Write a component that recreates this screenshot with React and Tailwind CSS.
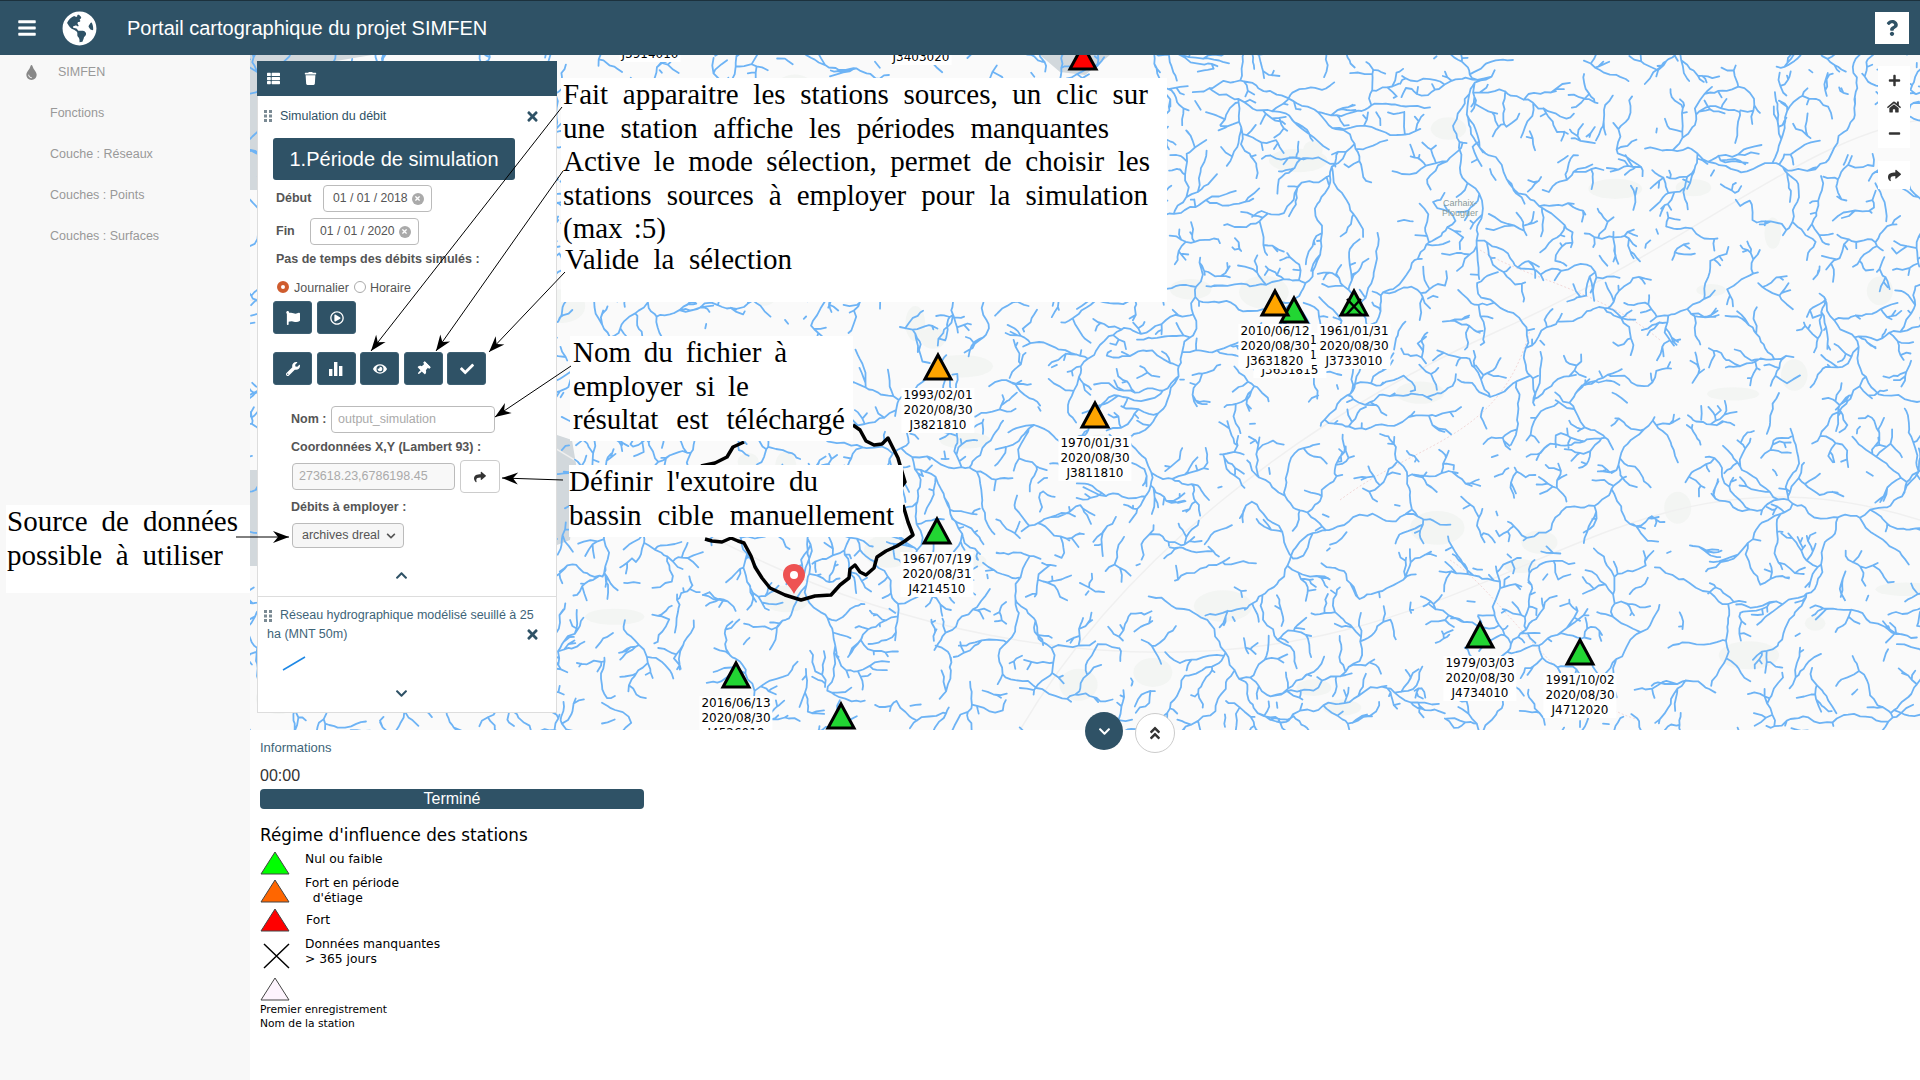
import React from "react";
import {
  FaBars, FaGlobeAmericas, FaTint, FaThList, FaTrash, FaTimes, FaFlag, FaRegPlayCircle, FaWrench,
  FaEye, FaThumbtack, FaCheck, FaShare, FaHome, FaPlus, FaMinus, FaChevronDown, FaChevronUp,
  FaAngleDoubleUp, FaQuestion,
} from "react-icons/fa";

// ── Hydrographic network, generated once from a fixed seed ───────────────────
let seed = 4711;
function rnd() {
  seed = (seed * 16807) % 2147483647;
  return seed / 2147483647;
}

const CELL = 14;

// Branches grow breadth first and stop when they reach a cell another one holds,
// which spreads the streams evenly over the map like a real catchment.
function buildRivers() {
  const occ = new Map();
  const out = [];
  const key = (x, y) => `${Math.floor(x / CELL)},${Math.floor(y / CELL)}`;
  const inside = (x, y) => x > 235 && x < 1935 && y > 40 && y < 745;
  let nextId = 1;

  function grow(queue) {
    while (queue.length) {
      const b = queue.shift();
      const id = nextId++;
      let { x, y, a } = b;
      let base = b.a;
      let d = `M${x.toFixed(1)} ${y.toFixed(1)}`;
      let walked = 0;
      let steps = 0;
      while (walked < b.len) {
        const step = 3 + rnd() * 5;
        base += (rnd() - 0.5) * 0.35;
        a += (rnd() - 0.5) * 1.9;
        a += (base - a) * 0.4;
        const nx = x + Math.cos(a) * step;
        const ny = y + Math.sin(a) * step;
        if (!inside(nx, ny)) break;
        const k = key(nx, ny);
        const holder = occ.get(k);
        if (holder && holder !== id && (holder !== b.parent || steps > 4)) break;
        occ.set(k, id);
        x = nx;
        y = ny;
        walked += step;
        steps++;
        d += `L${x.toFixed(1)} ${y.toFixed(1)}`;
        if (b.len > 10 && rnd() < 0.3) {
          const side = rnd() < 0.5 ? -1 : 1;
          queue.push({
            x, y, parent: id,
            a: a + side * (0.6 + rnd() * 0.8),
            len: b.len * (0.3 + rnd() * 0.4),
          });
        }
      }
      if (steps > 0) out.push(d);
    }
  }

  for (let gx = 240; gx < 1940; gx += 150) {
    for (let gy = 45; gy < 740; gy += 150) {
      grow([{ x: gx + rnd() * 110, y: gy + rnd() * 110, a: rnd() * Math.PI * 2, len: 170 + rnd() * 130, parent: 0 }]);
    }
  }
  // Fill what is left with short streams
  for (let i = 0; i < 1500; i++) {
    const x = 240 + rnd() * 1690;
    const y = 45 + rnd() * 695;
    if (!occ.has(key(x, y))) {
      grow([{ x, y, a: rnd() * Math.PI * 2, len: 35 + rnd() * 50, parent: 0 }]);
    }
  }
  return out.join("");
}

function buildBlotches() {
  const out = [];
  for (let i = 0; i < 60; i++) {
    out.push({ cx: 250 + rnd() * 1670, cy: 55 + rnd() * 675, rx: 8 + rnd() * 24, ry: 6 + rnd() * 12 });
  }
  return out;
}

const riverPath = buildRivers();
const blotches = buildBlotches();

const stations = [
  { x: 1083, base: 70, color: "#ff0000", lines: [] },
  { x: 650, base: 20, lines: ["J3914010"], hideMark: true, labelTop: -8 },
  { x: 921, base: 20, lines: ["J3403020"], hideMark: true, labelTop: -5 },
  { x: 938, base: 380, color: "#ffa500", lines: ["1993/02/01", "2020/08/30", "J3821810"] },
  { x: 1095, base: 428, color: "#ffa500", lines: ["1970/01/31", "2020/08/30", "J3811810"] },
  { x: 1294, base: 323, color: "#22d633", lines: ["1970/01/13", "2020/08/13", "J3631815"], labelX: 1290, labelTop: 333 - 55 },
  { x: 1275, base: 316, color: "#ffa500", lines: ["2010/06/12", "2020/08/30", "J3631820"] },
  { x: 1354, base: 316, color: "#22d633", cross: true, lines: ["1961/01/31", "2020/08/30", "J3733010"] },
  { x: 937, base: 544, color: "#22d633", lines: ["1967/07/19", "2020/08/31", "J4214510"] },
  { x: 736, base: 688, color: "#22d633", lines: ["2016/06/13", "2020/08/30", "J4526010"] },
  { x: 841, base: 729, color: "#22d633", lines: [] },
  { x: 1480, base: 648, color: "#22d633", lines: ["1979/03/03", "2020/08/30", "J4734010"] },
  { x: 1580, base: 665, color: "#22d633", lines: ["1991/10/02", "2020/08/30", "J4712020"] },
];

function Station({ s }) {
  const left = s.x - 250;
  const top = s.base - 55;
  return (
    <>
      {!s.hideMark && (
        <svg className="absolute" width="36" height="34" viewBox="0 0 36 34" style={{ left: left - 18, top: top - 29 }}>
          <path d="M18 4 L31 28 L5 28 Z" fill={s.color} stroke="#000" strokeWidth="3" strokeLinejoin="miter" />
          {s.cross && <path d="M11 12 L26 28 M25 12 L10 28" stroke="#000" strokeWidth="2.5" />}
        </svg>
      )}
      {s.lines.length > 0 && (
        <div
          className="absolute -translate-x-1/2 text-center text-[12px] leading-[15px] text-black whitespace-nowrap font-['DejaVu_Sans',sans-serif]"
          style={{ left: (s.labelX || s.x) - 250, top: s.labelTop !== undefined ? s.labelTop : top + 8 }}
        >
          {s.lines.map((l, i) => (
            <div key={i} className="bg-white px-[2px]">{l}</div>
          ))}
        </div>
      )}
    </>
  );
}

function MapLayer() {
  return (
    <svg className="absolute inset-0" width="1670" height="675" viewBox="250 55 1670 675">
      <rect x="250" y="55" width="1670" height="675" fill="#fafafa" />
      {blotches.map((b, i) => (
        <ellipse key={i} cx={b.cx} cy={b.cy} rx={b.rx} ry={b.ry} fill="#f3f5f3" />
      ))}
      <path d="M250 55 L372 55 L330 62 L257 66 L257 190 L250 190 Z M250 470 L257 470 L257 566 L250 566 Z M557 435 L572 440 L577 470 L570 540 L557 545 Z M1040 55 L1110 55 L1085 75 L1060 72 Z" fill="#d2d8dc" />
      <path d="M250 300 C500 360 700 620 1100 650 S1600 420 1920 520 M1020 730 C1120 560 1300 420 1500 330 S1800 140 1920 120" fill="none" stroke="#f0f0f0" strokeWidth="1.5" />
      <path d="M1340 500 C1420 440 1500 440 1530 330 M1480 250 C1530 280 1600 290 1660 340 M1450 560 C1500 590 1560 700 1640 720" fill="none" stroke="#f2d8d8" strokeWidth="1" strokeDasharray="2 2" />
      <path d={riverPath} fill="none" stroke="#6db3f5" strokeWidth="1.8" strokeLinejoin="round" strokeLinecap="round" />
      <path
        d="M701 466 L715 463 L727 457 L733 447 L744 442 M853 425 L860 430 L866 441 L874 445 L882 444 L888 438 L893 448 L898 458 L900 465 L905 482 L899 490 M903 505 L908 522 L913 535 L905 541 L897 546 L886 551 L877 557 L874 568 L866 575 L860 572 L855 565 L850 569 L849 578 L840 585 L831 595 L815 596 L801 600 L785 595 L770 588 L762 578 L755 567 L751 556 L744 543 L738 541 L731 538 L722 542 L712 541 L705 539"
        fill="none"
        stroke="#000"
        strokeWidth="3.5"
        strokeLinejoin="round"
      />
    </svg>
  );
}

function Grip() {
  return (
    <svg width="8" height="12" viewBox="0 0 8 12" className="shrink-0 fill-[#7a8a94]">
      <rect x="0" y="0" width="3" height="3" /><rect x="5" y="0" width="3" height="3" />
      <rect x="0" y="4.5" width="3" height="3" /><rect x="5" y="4.5" width="3" height="3" />
      <rect x="0" y="9" width="3" height="3" /><rect x="5" y="9" width="3" height="3" />
    </svg>
  );
}

function BarsIcon() {
  return (
    <svg width="14" height="14" viewBox="0 0 14 14" fill="currentColor">
      <rect x="0" y="7" width="3.4" height="7" />
      <rect x="5" y="0" width="3.4" height="14" />
      <rect x="10" y="4" width="3.4" height="10" />
    </svg>
  );
}

function ToolBtn({ children }) {
  return (
    <button className="w-[39px] h-[33px] rounded-[3px] bg-[#2f5266] border border-[#3d5f72] text-white flex items-center justify-center text-[14px]">
      {children}
    </button>
  );
}

function DateField({ value }) {
  return (
    <div className="w-[109px] h-[27px] rounded-[4px] border border-[#bbb] flex items-center pl-[9px] text-[12.2px] font-normal text-[#555]">
      <span>{value}</span>
      <span className="ml-[4px] w-[12px] h-[12px] rounded-full bg-[#aaa] text-white flex items-center justify-center">
        <FaTimes className="text-[7px]" />
      </span>
    </div>
  );
}

function SidePanel() {
  return (
    <div className="absolute left-[7px] top-[6px] w-[300px] h-[652px] bg-white border-x border-b border-[#ddd] text-[#555]">
      <div className="h-[35px] -mx-px bg-[#2f5266] flex items-center pl-[10px] gap-[24px] text-white text-[13px]">
        <FaThList />
        <FaTrash />
      </div>
      <div className="flex items-center h-[24px] mt-[8px] pl-[6px] pr-[16px] text-[12.5px] text-[#2f5266]">
        <Grip />
        <span className="ml-[8px]">Simulation du débit</span>
        <FaTimes className="ml-auto text-[15px]" />
      </div>
      <div className="ml-[15px] mt-[10px] w-[242px] h-[42px] rounded-[3px] bg-[#2f5266] text-white text-[20px] flex items-center justify-center">
        1.Période de simulation
      </div>
      <div className="flex items-center mt-[5px] ml-[18px] text-[12.5px] font-bold">
        <span className="w-[47px]">Début</span>
        <DateField value="01 / 01 / 2018" />
      </div>
      <div className="flex items-center mt-[6px] ml-[18px] text-[12.5px] font-bold">
        <span className="w-[34px]">Fin</span>
        <DateField value="01 / 01 / 2020" />
      </div>
      <div className="mt-[7px] ml-[18px] text-[12.5px] font-bold leading-[15px]">Pas de temps des débits simulés :</div>
      <div className="flex items-center mt-[14px] ml-[19px] text-[12.5px] h-[15px]">
        <span className="w-[12px] h-[12px] rounded-full bg-white border-[4px] border-[#cf5c2e] -mt-[4px]" />
        <span className="ml-[5px]">Journalier</span>
        <span className="ml-[5px] w-[12px] h-[12px] rounded-full border border-[#aaa] -mt-[4px]" />
        <span className="ml-[4px]">Horaire</span>
      </div>
      <div className="flex gap-[5px] ml-[15px] mt-[5px]">
        <ToolBtn><FaFlag /></ToolBtn>
        <ToolBtn><FaRegPlayCircle /></ToolBtn>
      </div>
      <div className="flex gap-[4.6px] ml-[15px] mt-[18px]">
        <ToolBtn><FaWrench /></ToolBtn>
        <ToolBtn><BarsIcon /></ToolBtn>
        <ToolBtn><FaEye /></ToolBtn>
        <ToolBtn><FaThumbtack className="rotate-45" /></ToolBtn>
        <ToolBtn><FaCheck /></ToolBtn>
      </div>
      <div className="flex items-center mt-[21px] ml-[33px] text-[12.5px] font-bold">
        <span className="w-[40px]">Nom :</span>
        <div className="w-[164px] h-[27px] rounded-[4px] border border-[#bbb] flex items-center pl-[6px] font-normal text-[#aaa]">
          output_simulation
        </div>
      </div>
      <div className="mt-[7px] ml-[33px] text-[12.5px] font-bold leading-[15px]">Coordonnées X,Y (Lambert 93) :</div>
      <div className="flex items-center mt-[5px] ml-[34px]">
        <div className="w-[163px] h-[27px] rounded-[4px] border border-[#bbb] bg-[#f8f8f8] flex items-center pl-[6px] text-[12.5px] text-[#aaa]">
          273618.23,6786198.45
        </div>
        <button className="ml-[5px] w-[40px] h-[33px] rounded-[4px] border border-[#ccc] flex items-center justify-center text-[#333] text-[12px]">
          <FaShare />
        </button>
      </div>
      <div className="mt-[7px] ml-[33px] text-[12.5px] font-bold leading-[15px]">Débits à employer :</div>
      <div className="mt-[8px] ml-[34px] w-[112px] h-[25px] rounded-[4px] border border-[#bbb] bg-[#f6f6f6] flex items-center pl-[9px] text-[12.5px]">
        archives dreal
        <FaChevronDown className="ml-[6px] text-[10px]" />
      </div>
      <div className="flex justify-center pr-[12px] mt-[21px] text-[#2f5266] text-[13px]">
        <FaChevronUp />
      </div>
      <div className="mt-[14px] border-t border-[#ddd] pt-[9px] pl-[9px] pr-[16px] text-[12.5px] leading-[19px] text-[#3e6478]">
        <div className="flex items-center">
          <span className="-ml-[3px]"><Grip /></span>
          <span className="ml-[8px] whitespace-nowrap">Réseau hydrographique modélisé seuillé à 25</span>
        </div>
        <div className="flex items-center">
          ha (MNT 50m)
          <FaTimes className="ml-auto text-[15px] text-[#2f5266]" />
        </div>
      </div>
      <svg width="24" height="15" className="ml-[24px] mt-[12px]">
        <path d="M1 14 L23 1" stroke="#1e88e5" strokeWidth="1.5" />
      </svg>
      <div className="flex justify-center pr-[12px] mt-[16px] text-[#2f5266] text-[13px]">
        <FaChevronDown />
      </div>
    </div>
  );
}

function MapControls() {
  return (
    <div className="absolute right-[10px] top-[11px] w-[32px] flex flex-col gap-[13px] text-[#333] text-[13px]">
      <div className="bg-white h-[82px] flex flex-col items-center justify-around py-[2px]">
        <FaPlus />
        <FaHome className="text-[14px]" />
        <FaMinus />
      </div>
      <div className="bg-white h-[28px] flex items-center justify-center">
        <FaShare />
      </div>
    </div>
  );
}

function Tri({ fill }) {
  return (
    <svg width="30" height="24" viewBox="0 0 30 24" className="shrink-0">
      <path d="M15 1 L29 23 L1 23 Z" fill={fill} stroke="#444" strokeWidth="1" />
    </svg>
  );
}

function Legend() {
  return (
    <div className="font-['DejaVu_Sans',sans-serif] text-black">
      <div className="text-[16.8px] leading-[22px]">Régime d'influence des stations</div>
      <div className="flex h-[26px] mt-[5px]">
        <Tri fill="#00ff00" />
        <span className="ml-[15px] pt-[1px] text-[12.3px] leading-[15px]">Nul ou faible</span>
      </div>
      <div className="flex h-[32px] -mt-[2px] items-center">
        <Tri fill="#ff6600" />
        <span className="ml-[15px] text-[12.3px] leading-[15px] whitespace-pre">{"Fort en période\n  d'étiage"}</span>
      </div>
      <div className="flex h-[26px] items-center">
        <Tri fill="#ff0000" />
        <span className="ml-[16px] text-[12.3px] leading-[15px]">Fort</span>
      </div>
      <div className="flex h-[32px] mt-[7px] items-center">
        <svg width="30" height="26" viewBox="0 0 30 26" className="shrink-0">
          <path d="M4 1 L29 25 M29 1 L4 25" stroke="#000" strokeWidth="1.5" />
        </svg>
        <span className="ml-[15px] pb-[8px] text-[12.3px] leading-[15px] whitespace-pre">{"Données manquantes\n> 365 jours"}</span>
      </div>
      <div className="mt-[5px]">
        <Tri fill="#fdf4fd" />
      </div>
      <div className="text-[10.7px] leading-[13.5px] mt-[2px]">
        Premier enregistrement
        <br />
        Nom de la station
      </div>
    </div>
  );
}

// Captions that were pasted over the screenshot
function Caption({ className, lines }) {
  return (
    <div className={`absolute bg-white text-black font-['Liberation_Serif',serif] leading-[33.6px] text-[29px] ${className}`}>
      {lines.map(([text, w, extra], i) => (
        <div key={i} className={`[text-align-last:justify] whitespace-nowrap ${extra || ""}`} style={{ width: w }}>{text}</div>
      ))}
    </div>
  );
}

const arrows = [
  [562, 107, 371, 351],
  [563, 171, 436, 351],
  [565, 272, 489, 352],
  [571, 366, 495, 417],
  [563, 480, 502, 478],
  [236, 537, 289, 537],
];

function Arrows() {
  return (
    <svg className="absolute inset-0 pointer-events-none" width="1920" height="1080">
      {arrows.map(([x1, y1, x2, y2], i) => {
        const a = Math.atan2(y2 - y1, x2 - x1);
        const pt = (d, s) => `${x2 - Math.cos(a) * d - Math.sin(a) * s},${y2 - Math.sin(a) * d + Math.cos(a) * s}`;
        return (
          <g key={i}>
            <line x1={x1} y1={y1} x2={x2} y2={y2} stroke="#000" strokeWidth="1" />
            <polygon points={`${x2},${y2} ${pt(16, 6)} ${pt(11, 0)} ${pt(16, -6)}`} fill="#000" />
          </g>
        );
      })}
    </svg>
  );
}

export default function App() {
  return (
    <div className="relative w-[1920px] h-[1080px] overflow-hidden bg-white font-['Liberation_Sans',sans-serif]">
      <header className="h-[55px] bg-[#2f5266] flex items-center text-white border-t border-black/40">
        <FaBars className="ml-[17px] text-[20px]" />
        <FaGlobeAmericas className="ml-[25px] text-[35px]" />
        <span className="ml-[30px] text-[20px]">Portail cartographique du projet SIMFEN</span>
        <button className="ml-auto mr-[11px] w-[34px] h-[32px] bg-white text-[#2f5266] flex items-center justify-center text-[16px]">
          <FaQuestion />
        </button>
      </header>

      <div className="flex h-[1025px]">
        <aside className="w-[250px] shrink-0 bg-[#f8f8f8] text-[12.5px] text-[#999]">
          <div className="flex items-center h-[34px] pl-[24px] mb-[4px]">
            <FaTint className="text-[15px] text-[#888]" />
            <span className="ml-[19px]">SIMFEN</span>
          </div>
          {["Fonctions", "Couche : Réseaux", "Couches : Points", "Couches : Surfaces"].map((t) => (
            <div key={t} className="pl-[50px] h-[41px] flex items-center">{t}</div>
          ))}
        </aside>

        <main className="flex-1 flex flex-col">
          <div className="relative h-[675px] overflow-hidden">
            <MapLayer />
            <div className="absolute left-[1180px] top-[143px] w-[60px] text-center text-[9px] leading-[10px] text-[#8a9a9a]">
              Carhaix-Plouguer
            </div>
            {stations.map((s) => (
              <Station key={`${s.x}`} s={s} />
            ))}
            <svg className="absolute left-[533px] top-[509px]" width="22" height="30" viewBox="0 0 22 30">
              <path d="M11 0 C4 0 0 5 0 11 C0 18 8 23 11 30 C14 23 22 18 22 11 C22 5 18 0 11 0 Z" fill="#ee5252" />
              <circle cx="11" cy="11" r="4" fill="#fff" />
            </svg>
            <SidePanel />
            <MapControls />
          </div>

          <div className="relative flex-1 pl-[10px] pt-[9px]">
            <button className="absolute left-[835px] -top-[18px] w-[38px] h-[38px] rounded-full bg-[#2f5266] text-white flex items-center justify-center text-[13px]">
              <FaChevronDown />
            </button>
            <button className="absolute left-[885px] -top-[17px] w-[40px] h-[40px] rounded-full bg-white border border-[#ccc] text-[#333] flex items-center justify-center text-[16px]">
              <FaAngleDoubleUp />
            </button>
            <div className="text-[13px] leading-[18px] text-[#3e6478]">Informations</div>
            <div className="mt-[9px] text-[16px] leading-[20px] text-[#333]">00:00</div>
            <div className="mt-[3px] w-[384px] h-[20px] rounded-[4px] bg-[#2f5266] text-white text-[16px] leading-[20px] text-center">
              Terminé
            </div>
            <div className="mt-[15px]">
              <Legend />
            </div>
          </div>
        </main>
      </div>

      <Caption
        className="left-[561px] top-[78px] w-[606px] h-[224px] pl-[2px]"
        lines={[
          ["Fait apparaitre les stations sources, un clic sur", 585],
          ["une station affiche les périodes manquantes", 546],
          ["Active le mode sélection, permet de choisir les", 587],
          ["stations sources à employer pour la simulation", 585],
          ["(max :5)", 103],
          ["Valide la sélection", 229, "-mt-[3px] pl-[2px]"],
        ]}
      />
      <Caption
        className="left-[570px] top-[336px] w-[283px] h-[105px] pl-[3px]"
        lines={[
          ["Nom du fichier à", 214],
          ["employer si le", 176],
          ["résultat est téléchargé", 272],
        ]}
      />
      <Caption
        className="left-[569px] top-[465px] w-[334px] h-[72px]"
        lines={[
          ["Définir l'exutoire du", 249],
          ["bassin cible manuellement", 325],
        ]}
      />
      <Caption
        className="left-[6px] top-[505px] w-[244px] h-[88px] pl-[1px]"
        lines={[
          ["Source de données", 231],
          ["possible à utiliser", 216],
        ]}
      />
      <Arrows />
    </div>
  );
}
